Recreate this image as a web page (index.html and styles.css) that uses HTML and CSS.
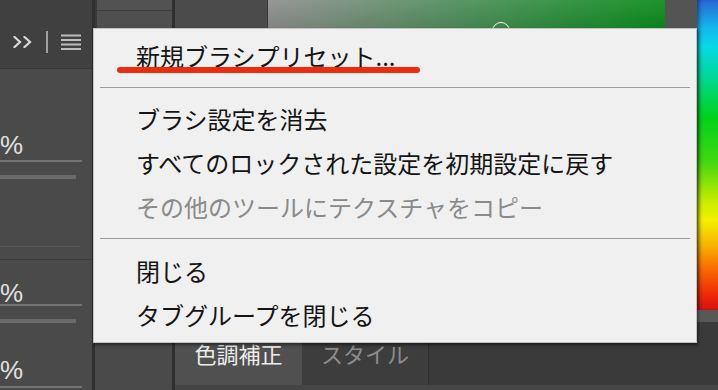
FILE: index.html
```html
<!DOCTYPE html>
<html lang="ja">
<head>
<meta charset="utf-8">
<title>ブラシ設定メニュー</title>
<link rel="stylesheet" href="styles.css">
</head>
<body>
<div class="app">
  <aside class="left">
    <div class="left-bar">
      <svg class="chev" width="19" height="12" viewBox="0 0 19 12"><polyline points="1.5,1 7,6 1.5,11"/><polyline points="11.5,1 17,6 11.5,11"/></svg>
      <span class="vsep"></span>
      <svg class="hamb" width="20" height="16" viewBox="0 0 20 16"><rect x="0" y="0.5" width="20" height="2"/><rect x="0" y="5" width="20" height="2"/><rect x="0" y="9.5" width="20" height="2"/><rect x="0" y="14" width="20" height="2"/></svg>
    </div>
    <div class="sec sec1">
      <div class="pct">%</div>
      <div class="rule"></div>
      <div class="bar"></div>
      <div class="faint"></div>
    </div>
    <div class="sec sec2">
      <div class="pct pct2">%</div>
      <div class="rule rule2"></div>
      <div class="bar"></div>
      <div class="pct pct3">%</div>
      <div class="rule rule3"></div>
    </div>
  </aside>
  <div class="center">
    <div class="col-a">
      <div class="a-top"><div class="a-box"></div></div>
      <div class="a-body"></div>
    </div>
    <div class="col-b">
      <div class="b-top">
        <div class="b-gray"></div>
        <div class="picker"><span class="marker"></span></div>
        <div class="b-gray2"></div>
      </div>
      <div class="b-body"></div>
      <div class="tabs">
        <div class="tab active">色調補正</div>
        <div class="tab">スタイル</div>
        <div class="tab-fill"></div>
      </div>
      <div class="b-foot"></div>
    </div>
  </div>
  <div class="hue">
    <div class="hue-grad"></div>
    <div class="hue-gap"></div>
    <div class="hue-dark"></div>
  </div>
</div>

<div class="menu">
  <div class="item">新規ブラシプリセット...</div>
  <div class="sep"></div>
  <div class="item">ブラシ設定を消去</div>
  <div class="item">すべてのロックされた設定を初期設定に戻す</div>
  <div class="item disabled">その他のツールにテクスチャをコピー</div>
  <div class="sep sep2"></div>
  <div class="item">閉じる</div>
  <div class="item">タブグループを閉じる</div>
  <span class="mark"></span>
</div>
</body>
</html>
```

FILE: styles.css
```css
* { box-sizing: border-box; }
html, body { margin: 0; padding: 0; }
body {
  width: 718px;
  height: 390px;
  overflow: hidden;
  background: #474747;
  font-family: "Noto Sans CJK JP", "Noto Sans", sans-serif;
  position: relative;
}
.app {
  display: flex;
  width: 718px;
  height: 390px;
}

/* left panel */
.left {
  width: 92px;
  flex: none;
  display: flex;
  flex-direction: column;
  overflow: hidden;
  background: #4a4a4a;
}
.left-bar {
  height: 69px;
  flex: none;
  display: flex;
  align-items: center;
  padding-top: 16px;
  background: #404040;
  border-bottom: 1px solid #363636;
}
.chev { margin-left: 13px; fill: none; stroke: #dadada; stroke-width: 2.2; stroke-linecap: square; }
.vsep { width: 2px; height: 22px; margin-left: 14px; background: #a0a0a0; }
.hamb { margin-left: 13px; fill: #bdbdbd; }
.sec { display: flex; flex-direction: column; }
.sec1 { height: 191px; border-bottom: 1px solid #3e3e3e; }
.sec2 { flex: 1; }
.pct {
  height: 20px;
  line-height: 20px;
  font-family: "Liberation Sans", Arial, sans-serif;
  font-size: 26px;
  color: #e0e0e0;
  margin-left: 0;
  margin-top: 66px;
}
.pct2 { margin-top: 23px; }
.pct3 { margin-top: 37px; }
.rule { width: 82px; height: 2px; background: #737373; margin-top: 5px; }
.rule2 { margin-top: 1px; }
.rule3 { margin-top: 6px; }
.bar { width: 76px; height: 4px; background: #6a6a6a; margin-top: 13px; }
.faint { width: 80px; height: 1px; background: #575757; margin-top: 67px; }

/* center area */
.center {
  width: 605px;
  flex: none;
  display: flex;
  border-left: 3px solid #2f2f2f;
}
.col-a {
  width: 80px;
  flex: none;
  display: flex;
  flex-direction: column;
  border-right: 3px solid #2f2f2f;
}
.a-top { height: 28px; background: #3a3a3a; padding-left: 2px; }
.a-box { height: 28px; background: #4f4f4f; border-top: 10px solid #525252; box-shadow: inset 0 1px 0 #3c3c3c; }
.a-body { flex: 1; background: #4a4a4a; }
.col-b {
  flex: 1;
  display: flex;
  flex-direction: column;
}
.b-top { height: 28px; display: flex; }
.b-gray { width: 93px; background: #4b4b4b; border-right: 1px solid #383838; }
.picker {
  width: 397px;
  position: relative;
  overflow: hidden;
  background:
    linear-gradient(to bottom, rgba(255,255,255,0.07), rgba(0,0,0,0.08)),
    linear-gradient(to right, #8f8f8f 0%, #6e8f74 25%, #4b8f58 50%, #2a8e3a 75%, #0c8d1c 100%);
}
.marker {
  position: absolute;
  left: 224px;
  top: 22px;
  width: 18px;
  height: 18px;
  border: 1.5px solid #f4f4f4;
  border-radius: 50%;
}
.b-gray2 { flex: 1; background: #545454; }
.b-body { flex: 1; background: #474747; }
.tabs { height: 55px; display: flex; }
.tab {
  width: 127px;
  display: flex;
  align-items: center;
  justify-content: center;
  padding-bottom: 9px;
  font-size: 22px;
  color: #8c8c8c;
  background: #3d3d3d;
  border-right: 1px solid #2e2e2e;
}
.tab.active { background: #505050; color: #ececec; border-right: none; }
.tab-fill { flex: 1; background: #3a3a3a; }
.b-foot { height: 5px; background: #454545; }

/* hue strip */
.hue { flex: 1; display: flex; flex-direction: column; }
.hue-grad {
  height: 310px;
  background: linear-gradient(to bottom, #2a66d6 0%, #12b8ec 9%, #06d8e8 15%, #00d894 25%, #00d21c 38%, #40d810 52%, #c8ec00 65%, #f4f000 71%, #f8b400 79%, #f86a00 87%, #ee2a08 95%, #d81010 100%);
  box-shadow: inset 4px 0 4px -2px rgba(0,0,0,0.45);
}
.hue-gap { height: 12px; background: #585858; }
.hue-dark { flex: 1; background: #3a3a3a; border-bottom: 5px solid #454545; }

/* popup menu */
.menu {
  position: absolute;
  left: 93px;
  top: 28px;
  width: 604px;
  height: 315px;
  background: #f0f0f0;
  border: 1px solid #c4c4c4;
  box-shadow: 1px 2px 3px rgba(0,0,0,0.5);
  padding: 5px 0 5px 0;
}
.item {
  height: 44px;
  line-height: 44px;
  padding-left: 42px;
  font-size: 24px;
  color: #141414;
  white-space: nowrap;
}
.item.disabled { color: #8a8a8a; }
.sep { height: 1px; margin: 9px 6px 9px 6px; background: #9c9c9c; }
.sep2 { margin-bottom: 10px; }
.mark {
  position: absolute;
  left: 23px;
  top: 38px;
  width: 303px;
  height: 6px;
  border-radius: 3px;
  background: #ee2b0e;
}
```
